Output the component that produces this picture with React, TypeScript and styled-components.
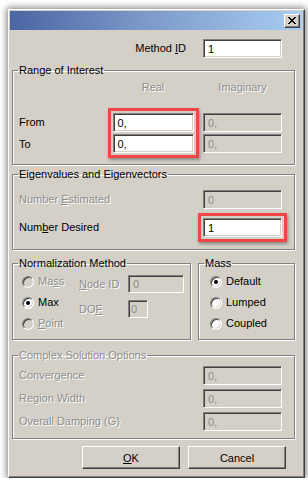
import React from 'react';
import styled, { createGlobalStyle, css } from 'styled-components';

const FACE = '#d4d0c8';

const GlobalStyle = createGlobalStyle`
    html, body {
        margin: 0;
        padding: 0;
        background: #fff;
    }
    body {
        font-family: 'Liberation Sans', Arial, sans-serif;
        font-size: 11px;
        color: #000;
    }
`;

const disabledText = css`
    color: #8d8d8d;
    text-shadow: 1px 1px 0 #fff;
`;

const Page = styled.div`
    padding: 9px 0 0 8px;
`;

const Window = styled.div`
    box-sizing: border-box;
    width: 297px;
    height: 469px;
    background: ${FACE};
    border: 1px solid;
    border-color: #fff #404040 #404040 #fff;
    box-shadow: inset -1px -1px 0 #808080, 0 0 7px 1px rgba(0, 0, 0, 0.55);
    display: flex;
    flex-direction: column;
`;

const TitleBar = styled.div`
    height: 19px;
    margin: 1px 2px 0 1px;
    background: linear-gradient(to right, #4a66a4, #7a98c8 45%, #a8ccf2);
    display: flex;
    align-items: center;
    justify-content: flex-end;
    padding-right: 2px;
`;

const CloseButton = styled.div`
    box-sizing: border-box;
    width: 16px;
    height: 14px;
    background: ${FACE};
    border: 1px solid;
    border-color: #fff #404040 #404040 #fff;
    box-shadow: inset -1px -1px 0 #808080;
    display: flex;
    align-items: center;
    justify-content: center;
`;

const Body = styled.div`
    padding: 9px 0 0 3px;
    display: flex;
    flex-direction: column;
`;

const MethodRow = styled.div`
    width: 270px;
    display: flex;
    align-items: center;
    justify-content: flex-end;
    gap: 17px;
`;

const Label = styled.span<{ $disabled?: boolean }>`
    white-space: nowrap;
    line-height: 13px;
    font-size: 11px;
    ${p => p.$disabled && disabledText}
`;

const Field = styled.div<{ $w?: number; $h?: number; $disabled?: boolean; $tight?: boolean }>`
    box-sizing: border-box;
    width: ${p => p.$w ?? 79}px;
    height: ${p => p.$h ?? 19}px;
    flex: none;
    background: ${p => (p.$disabled ? FACE : '#fff')};
    color: ${p => (p.$disabled ? '#8d8d8d' : '#000')};
    border: 1px solid;
    border-color: #808080 #fff #fff #808080;
    box-shadow: inset 1px 1px 0 #404040, inset -1px -1px 0 ${FACE};
    padding: 0 ${p => (p.$tight ? 2 : 4)}px;
    display: flex;
    align-items: center;
    font-size: 11px;
`;

const Group = styled.fieldset<{ $w: number; $top: number }>`
    box-sizing: border-box;
    width: ${p => p.$w}px;
    margin: ${p => p.$top}px 0 0 0;
    padding: 0;
    min-width: 0;
    border: 1px solid #808080;
    box-shadow: 1px 1px 0 #fff, inset 1px 1px 0 #fff;
`;

const Legend = styled.legend<{ $disabled?: boolean }>`
    margin-left: 5px;
    padding: 0 1px;
    line-height: 13px;
    font-size: 11px;
    ${p => p.$disabled && disabledText}
`;

const RangeBody = styled.div`
    display: flex;
    padding: 4px 12px 11px 6px;
    gap: 10px;
`;

const LabelColumn = styled.div`
    width: 84px;
    display: flex;
    flex-direction: column;
    padding-top: 35px;
    gap: 9px;
`;

const ValueColumn = styled.div<{ $w: number }>`
    width: ${p => p.$w}px;
    display: flex;
    flex-direction: column;
    align-items: center;
    gap: 19px;
`;

const Stack = styled.div`
    display: flex;
    flex-direction: column;
    gap: 2px;
`;

const Highlight = styled.div`
    position: relative;
    &::after {
        content: '';
        position: absolute;
        inset: -5px;
        border: 3px solid #f04646;
        box-shadow: 1px 2px 3px rgba(0, 0, 0, 0.35);
        pointer-events: none;
    }
`;

const RowsBody = styled.div<{ $gap: number; $pt: number; $pb: number }>`
    display: flex;
    flex-direction: column;
    gap: ${p => p.$gap}px;
    padding: ${p => p.$pt}px 12px ${p => p.$pb}px 6px;
`;

const FieldRow = styled.div`
    display: flex;
    align-items: center;
    justify-content: space-between;
`;

const SplitRow = styled.div`
    display: flex;
    gap: 7px;
    margin-top: 7px;
`;

const NormBody = styled.div`
    display: flex;
    padding: 5px 0 9px 9px;
`;

const RadioList = styled.div`
    display: flex;
    flex-direction: column;
    gap: 8px;
    width: 57px;
`;

const RadioItem = styled.label`
    display: flex;
    align-items: center;
    gap: 4px;
    line-height: 13px;
`;

const RadioCircle = styled.span<{ $checked?: boolean; $disabled?: boolean }>`
    box-sizing: border-box;
    width: 12px;
    height: 12px;
    flex: none;
    border-radius: 50%;
    border: 1px solid;
    border-color: #808080 #fff #fff #808080;
    box-shadow: inset 1px 1px 0 #404040, inset -1px -1px 0 ${FACE};
    background: ${p => (p.$disabled ? FACE : '#fff')};
    display: flex;
    align-items: center;
    justify-content: center;
    &::after {
        content: '';
        width: 4px;
        height: 4px;
        border-radius: 50%;
        background: #000;
        display: ${p => (p.$checked ? 'block' : 'none')};
    }
`;

const NodeGrid = styled.div`
    display: grid;
    grid-template-columns: 49px auto;
    row-gap: 7px;
    align-items: center;
    align-content: start;
`;

const MassBody = styled.div`
    padding: 5px 0 9px 11px;
`;

const ButtonRow = styled.div`
    width: 283px;
    display: flex;
    justify-content: flex-end;
    gap: 8px;
    padding-right: 9px;
    box-sizing: border-box;
    margin-top: 7px;
`;

const Button = styled.button`
    box-sizing: border-box;
    width: 98px;
    height: 23px;
    background: ${FACE};
    border: 1px solid;
    border-color: #fff #404040 #404040 #fff;
    box-shadow: inset -1px -1px 0 #808080;
    font-family: inherit;
    font-size: 11px;
    color: #000;
    padding: 0;
`;

const Radio: React.FC<{ label: React.ReactNode; checked?: boolean; disabled?: boolean }> = ({
    label,
    checked,
    disabled,
}) => (
    <RadioItem>
        <RadioCircle $checked={checked} $disabled={disabled} />
        <Label $disabled={disabled}>{label}</Label>
    </RadioItem>
);

export default function App() {
    return (
        <Page>
            <GlobalStyle />
            <Window>
                <TitleBar>
                    <CloseButton>
                        <svg width='8' height='7' viewBox='0 0 8 7'>
                            <path d='M0 0L7 7M1 0L8 7M7 0L0 7M8 0L1 7' stroke='#000' strokeWidth='1' />
                        </svg>
                    </CloseButton>
                </TitleBar>
                <Body>
                    <MethodRow>
                        <Label>
                            Method <u>I</u>D
                        </Label>
                        <Field>1</Field>
                    </MethodRow>

                    <Group $w={283} $top={6}>
                        <Legend>Range of Interest</Legend>
                        <RangeBody>
                            <LabelColumn>
                                <Label>From</Label>
                                <Label>To</Label>
                            </LabelColumn>
                            <ValueColumn $w={80}>
                                <Label $disabled>Real</Label>
                                <Highlight>
                                    <Stack>
                                        <Field $w={81}>0,</Field>
                                        <Field $w={81}>0,</Field>
                                    </Stack>
                                </Highlight>
                            </ValueColumn>
                            <ValueColumn $w={79}>
                                <Label $disabled>Imaginary</Label>
                                <Stack>
                                    <Field $disabled>0,</Field>
                                    <Field $disabled>0,</Field>
                                </Stack>
                            </ValueColumn>
                        </RangeBody>
                    </Group>

                    <Group $w={283} $top={3}>
                        <Legend>Eigenvalues and Eigenvectors</Legend>
                        <RowsBody $gap={9} $pt={9} $pb={12}>
                            <FieldRow>
                                <Label $disabled>
                                    Number <u>E</u>stimated
                                </Label>
                                <Field $disabled>0</Field>
                            </FieldRow>
                            <FieldRow>
                                <Label>
                                    Num<u>b</u>er Desired
                                </Label>
                                <Highlight>
                                    <Field>1</Field>
                                </Highlight>
                            </FieldRow>
                        </RowsBody>
                    </Group>

                    <SplitRow>
                        <Group $w={179} $top={0}>
                            <Legend>Normalization Method</Legend>
                            <NormBody>
                                <RadioList>
                                    <Radio disabled label={<>Ma<u>s</u>s</>} />
                                    <Radio checked label='Max' />
                                    <Radio disabled label={<><u>P</u>oint</>} />
                                </RadioList>
                                <NodeGrid>
                                    <Label $disabled>
                                        <u>N</u>ode ID
                                    </Label>
                                    <Field $w={56} $h={18} $disabled>0</Field>
                                    <Label $disabled>
                                        DO<u>F</u>
                                    </Label>
                                    <Field $w={20} $h={18} $disabled $tight>0</Field>
                                </NodeGrid>
                            </NormBody>
                        </Group>
                        <Group $w={97} $top={0}>
                            <Legend>Mass</Legend>
                            <MassBody>
                                <RadioList>
                                    <Radio checked label='Default' />
                                    <Radio label='Lumped' />
                                    <Radio label='Coupled' />
                                </RadioList>
                            </MassBody>
                        </Group>
                    </SplitRow>

                    <Group $w={283} $top={9}>
                        <Legend $disabled>Complex Solution Options</Legend>
                        <RowsBody $gap={4} $pt={4} $pb={7}>
                            <FieldRow>
                                <Label $disabled>Convergence</Label>
                                <Field $disabled>0,</Field>
                            </FieldRow>
                            <FieldRow>
                                <Label $disabled>Region Width</Label>
                                <Field $disabled>0,</Field>
                            </FieldRow>
                            <FieldRow>
                                <Label $disabled>Overall Damping (G)</Label>
                                <Field $disabled>0,</Field>
                            </FieldRow>
                        </RowsBody>
                    </Group>

                    <ButtonRow>
                        <Button>
                            <u>O</u>K
                        </Button>
                        <Button>Cancel</Button>
                    </ButtonRow>
                </Body>
            </Window>
        </Page>
    );
}
